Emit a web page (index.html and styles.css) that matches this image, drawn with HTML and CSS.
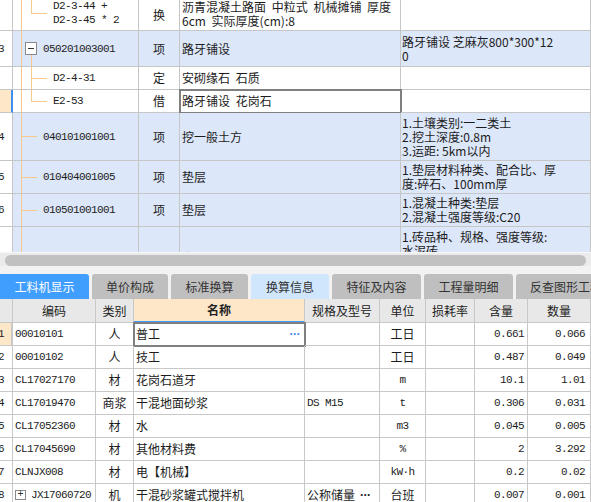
FILE: index.html
```html
<!DOCTYPE html>
<html lang="zh-CN">
<head>
<meta charset="utf-8">
<title>工料机显示</title>
<link rel="stylesheet" href="styles.css">
</head>
<body>
<div class="app">
  <div class="tgrid">
    <div class="trow h31">
      <div class="c rh"></div>
      <div class="c code first mono"><div>D2-3-44 +<br>D2-3-45 * 2</div></div>
      <div class="c type">换</div>
      <div class="c name ws top">沥青混凝土路面 中粒式 机械摊铺 厚度<br>6cm 实际厚度(cm):8</div>
      <div class="c feat"></div>
    </div>
    <div class="trow h36 blue">
      <div class="c rh"><span class="rn mono">3</span></div>
      <div class="c code parent"><span class="box"></span><span class="mono">050201003001</span></div>
      <div class="c type">项</div>
      <div class="c name">路牙铺设</div>
      <div class="c feat">路牙铺设 芝麻灰800*300*12<br>0</div>
    </div>
    <div class="trow h23">
      <div class="c rh"></div>
      <div class="c code child mono">D2-4-31</div>
      <div class="c type">定</div>
      <div class="c name ws">安砌缘石 石质</div>
      <div class="c feat"></div>
    </div>
    <div class="trow h23">
      <div class="c rh sel"></div>
      <div class="c code last mono">E2-53</div>
      <div class="c type">借</div>
      <div class="c name ws cur">路牙铺设 花岗石</div>
      <div class="c feat"></div>
    </div>
    <div class="trow h48 blue">
      <div class="c rh"><span class="rn mono">4</span></div>
      <div class="c code root mono">040101001001</div>
      <div class="c type">项</div>
      <div class="c name">挖一般土方</div>
      <div class="c feat">1.土壤类别:一二类土<br>2.挖土深度:0.8m<br>3.运距: 5km以内</div>
    </div>
    <div class="trow h33 blue">
      <div class="c rh"><span class="rn mono">5</span></div>
      <div class="c code root mono">010404001005</div>
      <div class="c type">项</div>
      <div class="c name">垫层</div>
      <div class="c feat">1.垫层材料种类、配合比、厚<br>度:碎石、100mm厚</div>
    </div>
    <div class="trow h33 blue">
      <div class="c rh"><span class="rn mono">6</span></div>
      <div class="c code root mono">010501001001</div>
      <div class="c type">项</div>
      <div class="c name">垫层</div>
      <div class="c feat">1.混凝土种类:垫层<br>2.混凝土强度等级:C20</div>
    </div>
    <div class="trow h62 blue">
      <div class="c rh"><span class="rn mono">7</span></div>
      <div class="c code root mono">010401003001</div>
      <div class="c type">项</div>
      <div class="c name">实心砖墙</div>
      <div class="c feat">1.砖品种、规格、强度等级:<br>水泥砖<br>2.墙体类型:直形墙<br>3.砂浆强度等级:M5</div>
    </div>
  </div>

  <div class="hscroll"><div class="thumb"></div></div>

  <div class="tabs">
    <div class="tab active w89">工料机显示</div>
    <div class="tab w76">单价构成</div>
    <div class="tab w77">标准换算</div>
    <div class="tab light w78">换算信息</div>
    <div class="tab w89">特征及内容</div>
    <div class="tab w89">工程量明细</div>
    <div class="tab w80">反查图形工程量</div>
  </div>

  <div class="btable">
    <div class="brow head">
      <div class="c rh"></div>
      <div class="c">编码</div>
      <div class="c">类别</div>
      <div class="c hname">名称</div>
      <div class="c">规格及型号</div>
      <div class="c">单位</div>
      <div class="c">损耗率</div>
      <div class="c">含量</div>
      <div class="c">数量</div>
    </div>
    <div class="brow">
      <div class="c rh sel"><span class="rn mono">1</span></div>
      <div class="c bcode mono">00010101</div>
      <div class="c cat">人</div>
      <div class="c bname cur"><span>普工</span><span class="dots blue-dots">···</span></div>
      <div class="c spec"></div>
      <div class="c unit">工日</div>
      <div class="c"></div>
      <div class="c num mono">0.661</div>
      <div class="c num last mono">0.066</div>
    </div>
    <div class="brow">
      <div class="c rh"><span class="rn mono">2</span></div>
      <div class="c bcode mono">00010102</div>
      <div class="c cat">人</div>
      <div class="c bname">技工</div>
      <div class="c spec"></div>
      <div class="c unit">工日</div>
      <div class="c"></div>
      <div class="c num mono">0.487</div>
      <div class="c num last mono">0.049</div>
    </div>
    <div class="brow">
      <div class="c rh"><span class="rn mono">3</span></div>
      <div class="c bcode mono">CL17027170</div>
      <div class="c cat">材</div>
      <div class="c bname">花岗石道牙</div>
      <div class="c spec"></div>
      <div class="c unit mono">m</div>
      <div class="c"></div>
      <div class="c num mono">10.1</div>
      <div class="c num last mono">1.01</div>
    </div>
    <div class="brow">
      <div class="c rh"><span class="rn mono">4</span></div>
      <div class="c bcode mono">CL17019470</div>
      <div class="c cat">商浆</div>
      <div class="c bname">干混地面砂浆</div>
      <div class="c spec mono">DS M15</div>
      <div class="c unit mono">t</div>
      <div class="c"></div>
      <div class="c num mono">0.306</div>
      <div class="c num last mono">0.031</div>
    </div>
    <div class="brow">
      <div class="c rh"><span class="rn mono">5</span></div>
      <div class="c bcode mono">CL17052360</div>
      <div class="c cat">材</div>
      <div class="c bname">水</div>
      <div class="c spec"></div>
      <div class="c unit mono">m3</div>
      <div class="c"></div>
      <div class="c num mono">0.045</div>
      <div class="c num last mono">0.005</div>
    </div>
    <div class="brow">
      <div class="c rh"><span class="rn mono">6</span></div>
      <div class="c bcode mono">CL17045690</div>
      <div class="c cat">材</div>
      <div class="c bname">其他材料费</div>
      <div class="c spec"></div>
      <div class="c unit mono">%</div>
      <div class="c"></div>
      <div class="c num mono">2</div>
      <div class="c num last mono">3.292</div>
    </div>
    <div class="brow">
      <div class="c rh"><span class="rn mono">7</span></div>
      <div class="c bcode mono">CLNJX008</div>
      <div class="c cat">材</div>
      <div class="c bname">电【机械】</div>
      <div class="c spec"></div>
      <div class="c unit mono">kW·h</div>
      <div class="c"></div>
      <div class="c num mono">0.2</div>
      <div class="c num last mono">0.02</div>
    </div>
    <div class="brow">
      <div class="c rh"><span class="rn mono">8</span></div>
      <div class="c bcode plus-row"><span class="pbox">+</span><span class="mono">JX17060720</span></div>
      <div class="c cat">机</div>
      <div class="c bname">干混砂浆罐式搅拌机</div>
      <div class="c spec"><span>公称储量</span><span class="dots">···</span></div>
      <div class="c unit">台班</div>
      <div class="c"></div>
      <div class="c num mono">0.007</div>
      <div class="c num last mono">0.001</div>
    </div>
  </div>
</div>
</body>
</html>
```

FILE: styles.css
```css
* { box-sizing: border-box; margin: 0; padding: 0; }
html, body { width: 591px; height: 502px; overflow: hidden; background: #fff; }
body {
  font-family: "Noto Sans CJK SC", "Noto Sans", sans-serif;
  font-size: 12px;
  color: #1c1c1c;
}
.app { width: 591px; height: 502px; overflow: hidden; }
.mono {
  font-family: "Liberation Mono", monospace;
  font-size: 11px;
  letter-spacing: -0.6px;
}

/* ---------- top grid ---------- */
.tgrid { height: 252px; overflow: hidden; background: #fff; }
.trow { display: grid; grid-template-columns: 13px 126px 41px 221px 190px; }
.h31 { height: 31px; }
.h36 { height: 36px; }
.h23 { height: 23px; }
.h48 { height: 48px; }
.h33 { height: 33px; }
.h62 { height: 62px; }
.c {
  display: flex;
  align-items: center;
  border-right: 1px solid #c6c6c6;
  border-bottom: 1px solid #c6c6c6;
  overflow: hidden;
  white-space: nowrap;
  line-height: 14px;
}
.blue > .c:not(.rh) { background-color: #dce7fa; }
.rh { background: #fff; }
.rh.sel { background: #fde7c9; border-right: 2px solid #3d8ff0; }
.rn { margin-left: -2px; }
.type { justify-content: center; }
.name { padding-left: 2px; }
.ws { word-spacing: 3px; }
.feat { padding-left: 1px; }
.top { align-items: flex-start; line-height: 13.5px; }
.cur { outline: 2px solid #7f7f7f; outline-offset: -1px; }

/* tree connectors */
.code {
  background-repeat: no-repeat;
  --t: linear-gradient(#f8c98a, #f8c98a);
}
.root {
  padding-left: 30px;
  background-image: var(--t), var(--t);
  background-position: 8px 0, 8px 50%;
  background-size: 1px 100%, 16px 1px;
}
.parent {
  padding-left: 12px;
  gap: 6px;
  background-image: var(--t), var(--t);
  background-position: 8px 0, 18px 24px;
  background-size: 1px 100%, 1px 100%;
}
.child {
  padding-left: 40px;
  background-image: var(--t), var(--t), var(--t);
  background-position: 8px 0, 18px 0, 18px 50%;
  background-size: 1px 100%, 1px 100%, 16px 1px;
}
.last {
  padding-left: 40px;
  background-image: var(--t), var(--t), var(--t);
  background-position: 8px 0, 18px 0, 18px 50%;
  background-size: 1px 100%, 1px 50%, 16px 1px;
}
.first {
  padding-left: 40px;
  align-items: flex-start;
  line-height: 13.5px;
  background-image: var(--t), var(--t), var(--t);
  background-position: 8px 0, 18px 0, 18px 13px;
  background-size: 1px 100%, 1px 13px, 16px 1px;
}
.box {
  width: 12px;
  height: 13px;
  border: 1px solid #8a8a8a;
  background: #fff linear-gradient(#333, #333) center / 6px 1px no-repeat;
  flex: none;
}

/* ---------- scrollbar ---------- */
.hscroll {
  height: 14px;
  background: #ebebeb;
  border-top: 1px solid #f7f7f7;
  padding: 2px 5px 0 5px;
}
.thumb { height: 11px; border-radius: 6px; background: #c1c1c1; }

/* ---------- tabs ---------- */
.tabs {
  height: 33px;
  background: #f2f2f2;
  padding-top: 8px;
  display: flex;
  gap: 3px;
  overflow: hidden;
}
.tab {
  flex: none;
  height: 25px;
  display: flex;
  align-items: center;
  justify-content: center;
  background: #bfbfbf;
  color: #333;
  border-radius: 3px 3px 0 0;
  font-size: 12px;
  white-space: nowrap;
  overflow: hidden;
}
.tab.active { background: #409eff; color: #fff; border-radius: 0 3px 0 0; }
.tab.light { background: #cfe6fd; }
.w89 { width: 89px; }
.w76 { width: 76px; }
.w77 { width: 77px; }
.w78 { width: 78px; }
.w80 { width: 80px; justify-content: flex-start; padding-left: 14px; }

/* ---------- bottom table ---------- */
.brow {
  display: grid;
  grid-template-columns: 13px 83px 38px 171px 75px 46px 49px 53px 63px;
  height: 23px;
}
.brow > .c { border-color: #c8c8c8; }
.brow.head { height: 24px; }
.head > .c { background: #e8e8e8; justify-content: center; color: #222; }
.head > .hname {
  background: #fde7c8;
  font-weight: bold;
  border-bottom: 2px solid #409eff;
}
.bcode { padding-left: 2px; }
.cat { justify-content: center; }
.bname { padding-left: 2px; justify-content: space-between; padding-right: 4px; }
.dots {
  font-family: "Liberation Sans", sans-serif;
  font-size: 12px;
  letter-spacing: -0.5px;
  font-weight: bold;
}
.blue-dots { color: #3c8ee8; }
.spec { padding-left: 2px; gap: 5px; }
.unit { justify-content: center; }
.num { justify-content: flex-end; padding-right: 3px; }
.num.last { padding-right: 5px; }
.plus-row { gap: 5px; }
.pbox {
  width: 11px;
  height: 10px;
  border: 1px solid #8a8a8a;
  display: flex;
  align-items: center;
  justify-content: center;
  font-family: "Liberation Mono", monospace;
  font-size: 10px;
  line-height: 1;
  color: #333;
  flex: none;
}
```
